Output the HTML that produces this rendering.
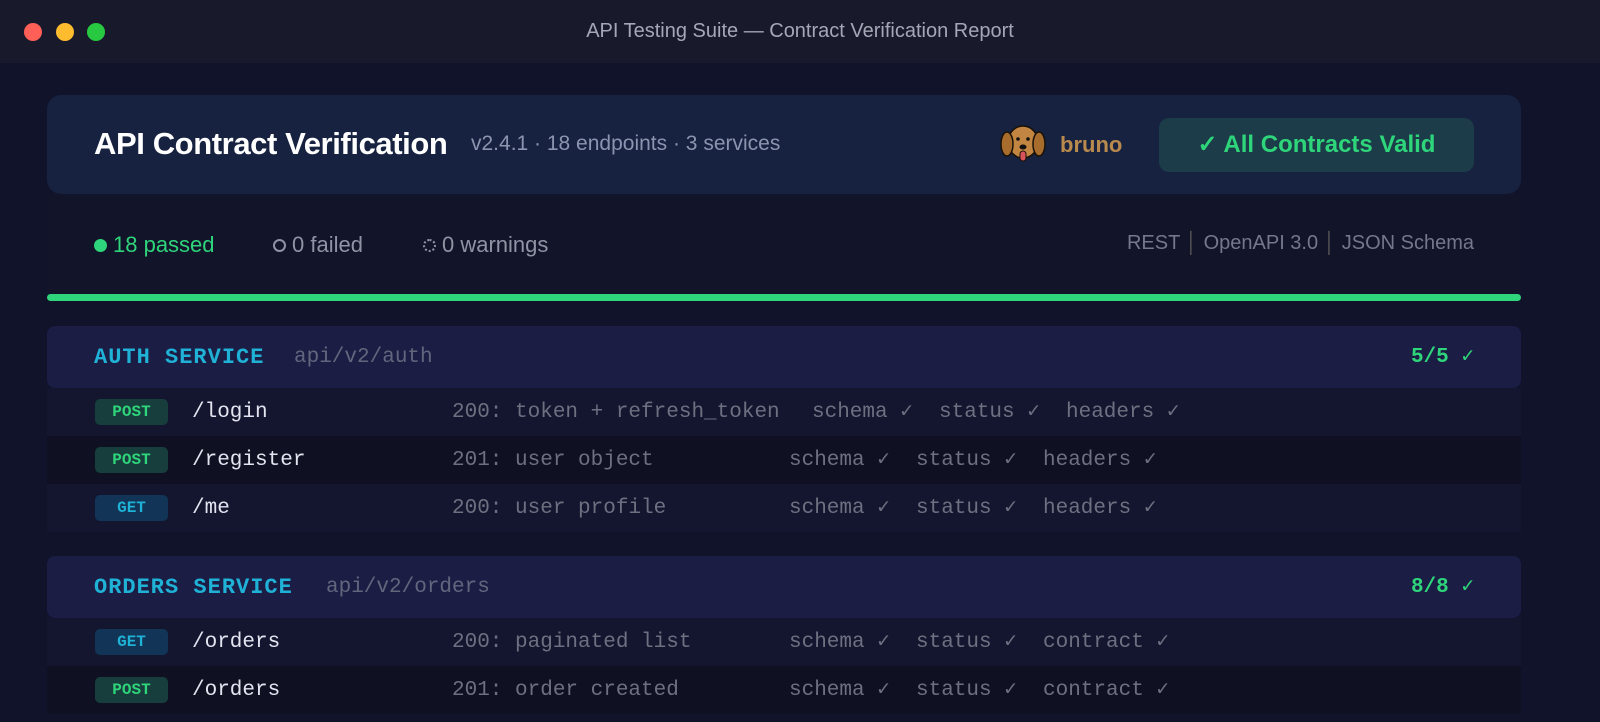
<!DOCTYPE html>
<html><head><meta charset="utf-8"><style>
*{margin:0;padding:0;box-sizing:border-box}
body{width:1600px;height:722px;overflow:hidden;background:#10132a;font-family:"Liberation Sans",sans-serif;position:relative}
.tb{position:absolute;left:0;top:0;width:1600px;height:63px;background:#181a2c}
.dot{position:absolute;top:23px;width:18px;height:18px;border-radius:50%}
.tt{position:absolute;top:20px;width:100%;text-align:center;color:#a4a7b6;font-size:20px}
.hdr{position:absolute;left:47px;top:95px;width:1474px;height:99px;background:#172240;border-radius:14px}
.title{position:absolute;left:47px;top:31px;color:#fff;font-weight:bold;font-size:31px;letter-spacing:-0.4px}
.sub{position:absolute;left:424px;top:37px;color:#8c94ae;font-size:21px}
.bruno{position:absolute;left:1013px;top:37px;color:#b98a4d;font-weight:bold;font-size:22px}
.valid{position:absolute;left:1112px;top:23px;width:315px;height:54px;background:#1b3c48;border-radius:10px;color:#2ed57a;font-weight:bold;font-size:24px;text-align:center;line-height:54px}
.stats{position:absolute;left:47px;top:194px;width:1474px;height:100px;background:#12142a}
.st{position:absolute;top:38px;font-size:22px;color:#8f93a3}
.bar{position:absolute;left:47px;top:294px;width:1474px;height:7px;background:#2ed57a;border-radius:4px}
.svc{position:absolute;left:47px;width:1474px;height:62px;background:#1b1d44;border-radius:8px;font-family:"Liberation Mono",monospace;line-height:64px}
.svc .n{position:absolute;left:47px;top:0;color:#1fb2d6;font-weight:bold;font-size:22px;letter-spacing:1px}
.svc .p{position:absolute;top:0;color:#62667d;font-size:21px}
.svc .c{position:absolute;right:47px;top:0;color:#2ed57a;font-size:21px;font-weight:bold}
.row{position:absolute;left:47px;width:1474px;height:48px;background:#14152f;font-family:"Liberation Mono",monospace;font-size:21px;line-height:50px}
.row.alt{background:#0f1022}
.row span{position:absolute;top:0;color:#6d7080;white-space:pre}
.m{position:absolute;left:48px;top:11px;width:73px;height:26px;border-radius:5px;font-weight:bold;font-size:16px;text-align:center;line-height:26px}
.post{background:#173d3c;color:#2ed57a}
.get{background:#123456;color:#1fb2d6}
.row .path{left:145px;color:#e2e4f0}
</style></head><body>
<div class="tb">
<div class="dot" style="left:24px;background:#fe5f57"></div>
<div class="dot" style="left:56px;background:#febc2e"></div>
<div class="dot" style="left:87px;background:#28c840"></div>
<div class="tt">API Testing Suite — Contract Verification Report</div>
</div>
<div class="hdr">
<div class="title">API Contract Verification</div>
<div class="sub">v2.4.1 · 18 endpoints · 3 services</div>
<svg style="position:absolute;left:950px;top:25px" width="52" height="50" viewBox="0 0 50 50">
<ellipse cx="25" cy="22" rx="15" ry="16" fill="#c28642" stroke="#1a1208" stroke-width="1.5"/>
<ellipse cx="9" cy="24" rx="6" ry="12" fill="#a86c2c" stroke="#1a1208" stroke-width="1.5"/>
<ellipse cx="41" cy="24" rx="6" ry="12" fill="#a86c2c" stroke="#1a1208" stroke-width="1.5"/>
<circle cx="20" cy="19" r="1.8" fill="#111"/><circle cx="30" cy="19" r="1.8" fill="#111"/>
<ellipse cx="25" cy="27" rx="3.5" ry="2.5" fill="#111"/>
<rect x="22" y="31" width="6" height="10" rx="3" fill="#d9535b" stroke="#1a1208"/>
</svg>
<div class="bruno">bruno</div>
<div class="valid">✓ All Contracts Valid</div>
</div>
<div class="stats">
<div class="st" style="left:47px;color:#2ed57a"><span style="display:inline-block;width:13px;height:13px;border-radius:50%;background:#2ed57a;margin-right:6px"></span>18 passed</div>
<div class="st" style="left:226px"><span style="display:inline-block;width:13px;height:13px;border-radius:50%;border:2px solid #8f93a3;margin-right:6px"></span>0 failed</div>
<div class="st" style="left:376px"><span style="display:inline-block;width:13px;height:13px;border-radius:50%;border:2px dotted #8f93a3;margin-right:6px"></span>0 warnings</div>
<div class="st" style="right:47px;color:#74788a;font-size:20px">REST <span style="color:#555">│</span> OpenAPI 3.0 <span style="color:#555">│</span> JSON Schema</div>
</div>
<div class="bar"></div>

<div class="svc" style="top:326px"><div class="n">AUTH SERVICE</div><div class="p" style="left:247px">api/v2/auth</div><div class="c">5/5 ✓</div></div>
<div class="row" style="top:388px"><div class="m post">POST</div><span class="path">/login</span><span style="left:405px">200: token + refresh_token</span><span style="left:765px">schema ✓</span><span style="left:892px">status ✓</span><span style="left:1019px">headers ✓</span></div>
<div class="row alt" style="top:436px"><div class="m post">POST</div><span class="path">/register</span><span style="left:405px">201: user object</span><span style="left:742px">schema ✓</span><span style="left:869px">status ✓</span><span style="left:996px">headers ✓</span></div>
<div class="row" style="top:484px"><div class="m get">GET</div><span class="path">/me</span><span style="left:405px">200: user profile</span><span style="left:742px">schema ✓</span><span style="left:869px">status ✓</span><span style="left:996px">headers ✓</span></div>

<div class="svc" style="top:556px"><div class="n">ORDERS SERVICE</div><div class="p" style="left:279px">api/v2/orders</div><div class="c">8/8 ✓</div></div>
<div class="row" style="top:618px"><div class="m get">GET</div><span class="path">/orders</span><span style="left:405px">200: paginated list</span><span style="left:742px">schema ✓</span><span style="left:869px">status ✓</span><span style="left:996px">contract ✓</span></div>
<div class="row alt" style="top:666px"><div class="m post">POST</div><span class="path">/orders</span><span style="left:405px">201: order created</span><span style="left:742px">schema ✓</span><span style="left:869px">status ✓</span><span style="left:996px">contract ✓</span></div>
</body></html>
